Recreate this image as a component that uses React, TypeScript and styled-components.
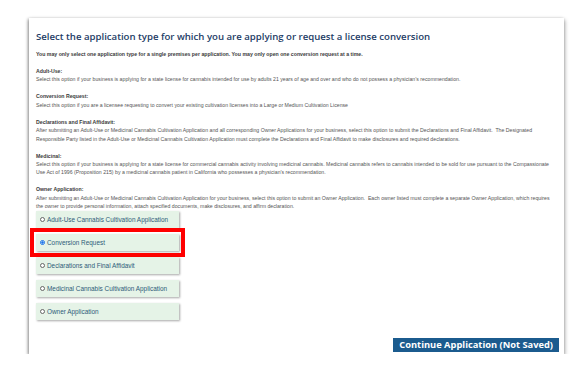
import styled, { createGlobalStyle } from "styled-components";

const GlobalStyle = createGlobalStyle`
    body {
        margin: 0;
        background: #ffffff;
    }
`

const Page = styled.div`
    padding: 18px 11px 0 29px;
`

const Card = styled.main`
    display: flex;
    flex-direction: column;
    box-sizing: border-box;
    height: 336px;
    padding: 12px 5px 2px 7px;
    background: #ffffff;
    box-shadow: -1px 1px 3px rgba(0, 0, 0, 0.4), 1px 2px 4px rgba(0, 0, 0, 0.3);
`

const Title = styled.h1`
    margin: 0 0 7px;
    font-family: "Open Sans", "Liberation Sans", sans-serif;
    font-size: 9.6px;
    font-weight: 600;
    line-height: 13px;
    color: #1d3c66;
`

const Text = styled.p<{ $bold?: boolean }>`
    margin: 0;
    font-family: "Liberation Sans", Arial, sans-serif;
    font-size: 5.2px;
    line-height: 8.4px;
    white-space: nowrap;
    color: ${p => p.$bold ? "#3a3a3a" : "#555555"};
    font-weight: ${p => p.$bold ? 700 : 400};
`

const Section = styled.section`
    margin-top: 8.6px;
`

const Options = styled.div`
    display: flex;
    flex-direction: column;
    gap: 6px;
    margin-top: 0;
    width: 143px;
`

const Option = styled.label<{ $highlight?: boolean }>`
    display: flex;
    align-items: center;
    gap: 2px;
    height: 17px;
    padding-left: 4px;
    background: #e5f3e7;
    box-shadow: 1px 1px 2px rgba(0, 0, 0, 0.35);
    font-family: "Liberation Sans", Arial, sans-serif;
    font-size: 6.4px;
    color: #2d5b78;
    outline: ${p => p.$highlight ? "4px solid #ff0000" : "none"};
    outline-offset: 2px;
`

const Radio = styled.span<{ $checked?: boolean }>`
    box-sizing: border-box;
    width: 5px;
    height: 5px;
    border-radius: 50%;
    border: 0.6px solid ${p => p.$checked ? "#1a73e8" : "#666666"};
    background: ${p => p.$checked ? "radial-gradient(circle, #1a73e8 45%, #ffffff 55%)" : "#ffffff"};
`

const Footer = styled.div`
    display: flex;
    justify-content: flex-end;
    margin-top: auto;
`

const ContinueButton = styled.button`
    height: 14px;
    padding: 0 6px;
    border: none;
    background: #1b5b8e;
    color: #ffffff;
    font-family: "Open Sans", "Liberation Sans", sans-serif;
    font-size: 9.3px;
    font-weight: 700;
    line-height: 14px;
`

const sections = [
    {
        label: "Adult-Use:",
        lines: ["Select this option if your business is applying for a state license for cannabis intended for use by adults 21 years of age and over and who do not possess a physician\u2019s recommendation."],
    },
    {
        label: "Conversion Request:",
        lines: ["Select this option if you are a licensee requesting to convert your existing cultivation licenses into a Large or Medium Cultivation License"],
    },
    {
        label: "Declarations and Final Affidavit:",
        lines: [
            "After submitting an Adult-Use or Medicinal Cannabis Cultivation Application and all corresponding Owner Applications for your business, select this option to submit the Declarations and Final Affidavit.\u00a0 The Designated",
            "Responsible Party listed in the Adult-Use or Medicinal Cannabis Cultivation Application must complete the Declarations and Final Affidavit to make disclosures and required declarations.",
        ],
    },
    {
        label: "Medicinal:",
        lines: [
            "Select this option if your business is applying for a state license for commercial cannabis activity involving medicinal cannabis. Medicinal cannabis refers to cannabis intended to be sold for use pursuant to the Compassionate",
            "Use Act of 1996 (Proposition 215) by a medicinal cannabis patient in California who possesses a physician\u2019s recommendation.",
        ],
    },
    {
        label: "Owner Application:",
        lines: [
            "After submitting an Adult-Use or Medicinal Cannabis Cultivation Application for your business, select this option to submit an Owner Application.\u00a0 Each owner listed must complete a separate Owner Application, which requires",
            "the owner to provide personal information, attach specified documents, make disclosures, and affirm declaration.",
        ],
    },
]

const options = [
    "Adult-Use Cannabis Cultivation Application",
    "Conversion Request",
    "Declarations and Final Affidavit",
    "Medicinal Cannabis Cultivation Application",
    "Owner Application",
]

function App() {
    const selected = "Conversion Request"

    return (
        <Page>
            <GlobalStyle />
            <Card>
                <Title>Select the application type for which you are applying or request a license conversion</Title>
                <Text $bold>You may only select one application type for a single premises per application. You may only open one conversion request at a time.</Text>

                {sections.map(s => (
                    <Section key={s.label}>
                        <Text $bold>{s.label}</Text>
                        {s.lines.map(l => <Text key={l}>{l}</Text>)}
                    </Section>
                ))}

                <Options>
                    {options.map(o => (
                        <Option key={o} $highlight={o === selected}>
                            <Radio $checked={o === selected} />
                            {o}
                        </Option>
                    ))}
                </Options>

                <Footer>
                    <ContinueButton>Continue Application (Not Saved)</ContinueButton>
                </Footer>
            </Card>
        </Page>
    )
}

export default App
